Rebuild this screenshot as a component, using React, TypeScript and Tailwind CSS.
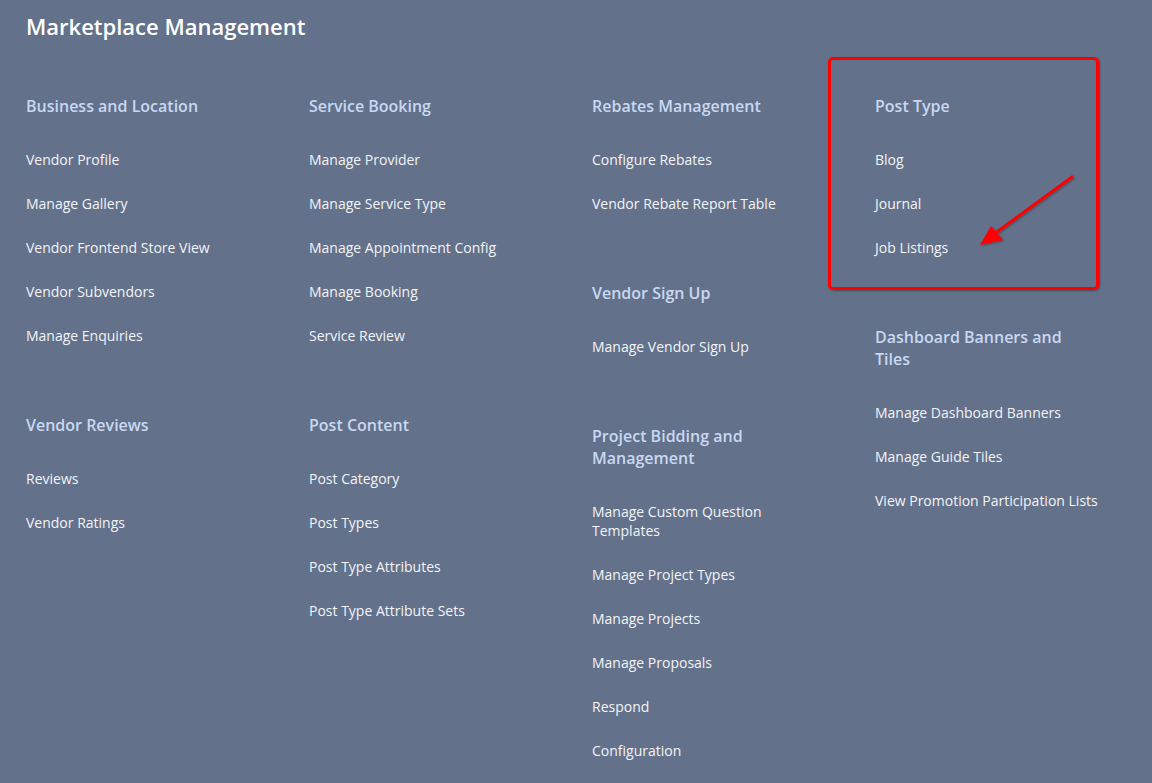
import React from 'react'

type Group = { title: string; links: string[] }

const columns: Group[][] = [
  [
    {
      title: 'Business and Location',
      links: ['Vendor Profile', 'Manage Gallery', 'Vendor Frontend Store View', 'Vendor Subvendors', 'Manage Enquiries'],
    },
    { title: 'Vendor Reviews', links: ['Reviews', 'Vendor Ratings'] },
  ],
  [
    {
      title: 'Service Booking',
      links: ['Manage Provider', 'Manage Service Type', 'Manage Appointment Config', 'Manage Booking', 'Service Review'],
    },
    {
      title: 'Post Content',
      links: ['Post Category', 'Post Types', 'Post Type Attributes', 'Post Type Attribute Sets'],
    },
  ],
  [
    { title: 'Rebates Management', links: ['Configure Rebates', 'Vendor Rebate Report Table'] },
    { title: 'Vendor Sign Up', links: ['Manage Vendor Sign Up'] },
    {
      title: 'Project Bidding and Management',
      links: [
        'Manage Custom Question Templates',
        'Manage Project Types',
        'Manage Projects',
        'Manage Proposals',
        'Respond',
        'Configuration',
      ],
    },
  ],
  [
    { title: 'Post Type', links: ['Blog', 'Journal', 'Job Listings'] },
    {
      title: 'Dashboard Banners and Tiles',
      links: ['Manage Dashboard Banners', 'Manage Guide Tiles', 'View Promotion Participation Lists'],
    },
  ],
]

function MenuGroup({ group }: { group: Group }) {
  return (
    <div className="flex flex-col">
      <h3 className="max-w-[210px] text-[16px] font-semibold leading-[22px] text-[#c9d8f1]">{group.title}</h3>
      <ul className="mt-[33px] flex flex-col gap-[25px]">
        {group.links.map((l) => (
          <li key={l} className="text-[14px] leading-[19px] text-[#f3f4f6]">
            <a href="#">{l}</a>
          </li>
        ))}
      </ul>
    </div>
  )
}

export default function App() {
  return (
    <div
      className="relative min-h-[783px] w-full overflow-hidden bg-[#63718b] px-[26px] pt-[11px]"
      style={{ fontFamily: '"Open Sans", "Liberation Sans", sans-serif' }}
    >
      <h1 className="text-[22px] font-semibold leading-[30px] text-white">Marketplace Management</h1>

      <div className="mt-[54px] flex">
        {columns.map((col, i) => (
          <div key={i} className="flex w-[283px] shrink-0 flex-col gap-[69px] pr-[50px]">
            {col.map((g) => (
              <MenuGroup key={g.title} group={g} />
            ))}
          </div>
        ))}
      </div>

      {/* annotation overlay */}
      <div className="pointer-events-none absolute left-[828px] top-[57px] h-[233px] w-[271px] rounded-[5px] border-[3px] border-[#ff0000] shadow-[1px_1px_2px_rgba(0,0,0,0.35)]" />
      <svg className="pointer-events-none absolute left-0 top-0" width="1152" height="783">
        <defs>
          <filter id="sh" x="-20%" y="-20%" width="140%" height="140%">
            <feDropShadow dx="1" dy="1" stdDeviation="0.8" floodColor="#000" floodOpacity="0.35" />
          </filter>
        </defs>
        <g filter="url(#sh)">
          <line x1="1072" y1="177" x2="994" y2="234" stroke="#ff0000" strokeWidth="3" strokeLinecap="round" />
          <polygon points="980,245 991,226 1003,240" fill="#ff0000" />
        </g>
      </svg>
    </div>
  )
}
